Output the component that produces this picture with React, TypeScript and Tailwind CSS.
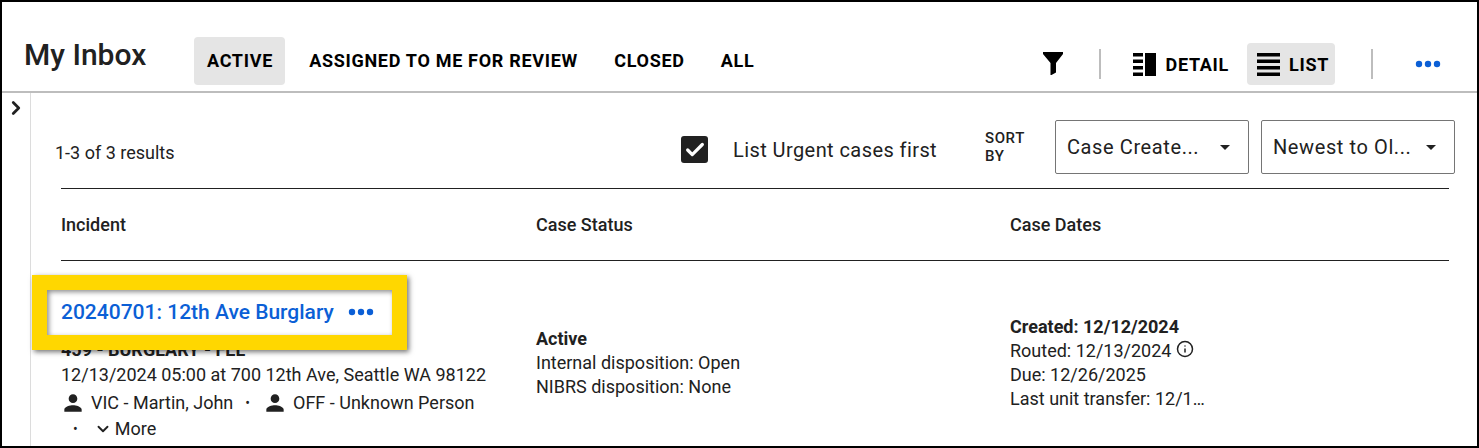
import { Check, ChevronDown, ChevronRight, Info } from "lucide-react";

const tabs = ["ACTIVE", "ASSIGNED TO ME FOR REVIEW", "CLOSED", "ALL"];

function Dots({ className }: { className?: string }) {
  return (
    <svg width="26" height="8" viewBox="0 0 26 8" className={className} fill="#0b5fd6">
      <circle cx="4" cy="4" r="3.2" />
      <circle cx="13" cy="4" r="3.2" />
      <circle cx="22" cy="4" r="3.2" />
    </svg>
  );
}

function Person() {
  return (
    <svg width="26" height="26" viewBox="0 0 24 24" fill="#212121" className="shrink-0">
      <path d="M12 12c2.21 0 4-1.79 4-4s-1.79-4-4-4-4 1.79-4 4 1.79 4 4 4zm0 2c-2.67 0-8 1.34-8 4v2h16v-2c0-2.66-5.33-4-8-4z" />
    </svg>
  );
}

function SortSelect({ label }: { label: string }) {
  return (
    <div className="flex h-[54px] w-[194px] items-center justify-between rounded-[2px] border border-[#757575] pl-[11px] pr-[18px] text-[20px] tracking-[0.6px] text-[#212121]">
      <span>{label}</span>
      <span className="h-0 w-0 border-x-[5px] border-t-[5px] border-x-transparent border-t-[#212121]" />
    </div>
  );
}

export default function App() {
  return (
    <div className="relative flex h-[448px] w-[1479px] flex-col overflow-hidden border-2 border-black bg-white font-['Roboto',sans-serif] text-[#212121]">
      {/* Header */}
      <header className="flex h-[91px] shrink-0 items-start border-b-2 border-[#bdbdbd]">
        <h1 className="ml-[22px] mt-[33px] w-[170px] text-[30px] font-medium leading-[40px] text-[#212121]">My Inbox</h1>
        <nav className="mt-[35px] flex items-center">
          {tabs.map((tab, i) => (
            <span
              key={tab}
              className={`mr-[11.2px] flex h-[48px] items-center rounded-[4px] pb-[1px] pl-[13px] pr-[12px] text-[18px] font-bold tracking-[0.7px] text-black ${i === 0 ? "bg-[#e5e5e5]" : ""}`}
            >
              {tab}
            </span>
          ))}
        </nav>
        <div className="ml-auto mr-[36px] mt-[41px] flex items-center">
          <svg width="24" height="24" viewBox="0 0 24 24" fill="#000" className="mr-[34px]">
            <path d="M2 0h20v2L15 11v9.5L10.5 23H9.5V11L2 2z" />
          </svg>
          <span className="mr-[32px] h-[30px] w-[2px] bg-[#bdbdbd]" />
          <span className="mr-[18px] flex h-[42px] items-center gap-[9px] text-[18px] font-bold tracking-[0.7px] text-black">
            <svg width="23" height="23" viewBox="0 0 23 23" fill="#000">
              <rect x="12" y="0" width="11" height="23" />
              <rect x="0" y="0" width="10" height="3.5" />
              <rect x="0" y="6.5" width="10" height="3.5" />
              <rect x="0" y="13" width="10" height="3.5" />
              <rect x="0" y="19.5" width="10" height="3.5" />
            </svg>
            DETAIL
          </span>
          <span className="mr-[36px] flex h-[42px] w-[88px] items-center gap-[9px] rounded-[4px] bg-[#e5e5e5] pl-[10px] text-[18px] font-bold tracking-[0.7px] text-black">
            <svg width="23" height="23" viewBox="0 0 23 23" fill="#000">
              <rect x="0" y="0" width="23" height="3.5" />
              <rect x="0" y="6.5" width="23" height="3.5" />
              <rect x="0" y="13" width="23" height="3.5" />
              <rect x="0" y="19.5" width="23" height="3.5" />
            </svg>
            LIST
          </span>
          <span className="mr-[42px] h-[30px] w-[2px] bg-[#bdbdbd]" />
          <Dots />
        </div>
      </header>

      <div className="flex min-h-0 flex-1">
        {/* Collapsed side rail */}
        <aside className="w-[29px] shrink-0 border-r border-[#dcdcdc] pl-[3px] pt-[4px]">
          <ChevronRight size={22} strokeWidth={3} className="text-[#212121]" />
        </aside>

        <main className="min-w-0 flex-1 pl-[30px] pr-[22px]">
          {/* Results toolbar */}
          <div className="-ml-[6px] flex h-[95px] items-start">
            <span className="mt-[49px] w-[626px] text-[18px] leading-[22px]">1-3 of 3 results</span>
            <span className="mt-[43px] flex h-[27px] w-[27px] items-center justify-center rounded-[3px] bg-[#212121]">
              <Check size={22} strokeWidth={3.5} className="text-white" />
            </span>
            <span className="ml-[25px] mt-[43px] w-[252px] text-[20px] leading-[28px] tracking-[0.42px]">List Urgent cases first</span>
            <span className="mt-[36px] w-[70px] text-[15px] font-medium leading-[18px] tracking-[0.6px]">
              SORT
              <br />
              BY
            </span>
            <div className="mt-[27px] flex gap-[12px]">
              <SortSelect label="Case Create..." />
              <SortSelect label="Newest to Ol..." />
            </div>
          </div>

          <div className="mr-[6px]">
            {/* Column headings */}
            <div className="grid h-[73px] grid-cols-[475px_474px_1fr] items-center border-y border-[#212121] text-[18px] font-medium">
              <span>Incident</span>
              <span>Case Status</span>
              <span>Case Dates</span>
            </div>

            {/* Case row */}
            <div className="grid grid-cols-[475px_474px_1fr] text-[18px] leading-[24px]">
              <div>
                <div className="mt-[37px] flex h-[28px] items-center gap-[14px] text-[21px] font-medium text-[#0b5fd6]">
                  20240701: 12th Ave Burglary
                  <Dots />
                </div>
                <div className="mt-[12px] font-bold">459 - BURGLARY - FEL</div>
                <div className="mt-[1px]">12/13/2024 05:00 at 700 12th Ave, Seattle WA 98122</div>
                <div className="mt-[3px] flex h-[25px] items-center">
                  <span className="-ml-[1px] flex shrink-0 items-center">
                    <Person />
                  </span>
                  <span className="ml-[5px]">VIC - Martin, John</span>
                  <span className="ml-[12px] mr-[12px] text-[14px]">•</span>
                  <Person />
                  <span className="ml-[5px]">OFF - Unknown Person</span>
                </div>
                <div className="mt-[1px] flex h-[25px] items-center">
                  <span className="ml-[12px] text-[14px]">•</span>
                  <ChevronDown size={18} strokeWidth={2.5} className="ml-[16px] mr-[3px]" />
                  More
                </div>
              </div>
              <div className="pt-[66px]">
                <div className="font-bold">Active</div>
                <div>Internal disposition: Open</div>
                <div>NIBRS disposition: None</div>
              </div>
              <div className="pt-[54px]">
                <div className="font-bold">Created: 12/12/2024</div>
                <div className="flex items-start">
                  Routed: 12/13/2024
                  <Info size={18} className="ml-[5px] mt-[1px]" />
                </div>
                <div>Due: 12/26/2025</div>
                <div>Last unit transfer: 12/1…</div>
              </div>
            </div>
          </div>
        </main>
      </div>

      {/* Callout highlight */}
      <div className="absolute left-[30px] top-[273px] h-[75px] w-[375px] border-[15px] border-[#ffd700] shadow-[2px_2px_5px_rgba(0,0,0,0.55),inset_2px_2px_5px_rgba(0,0,0,0.45)]" />
    </div>
  );
}
